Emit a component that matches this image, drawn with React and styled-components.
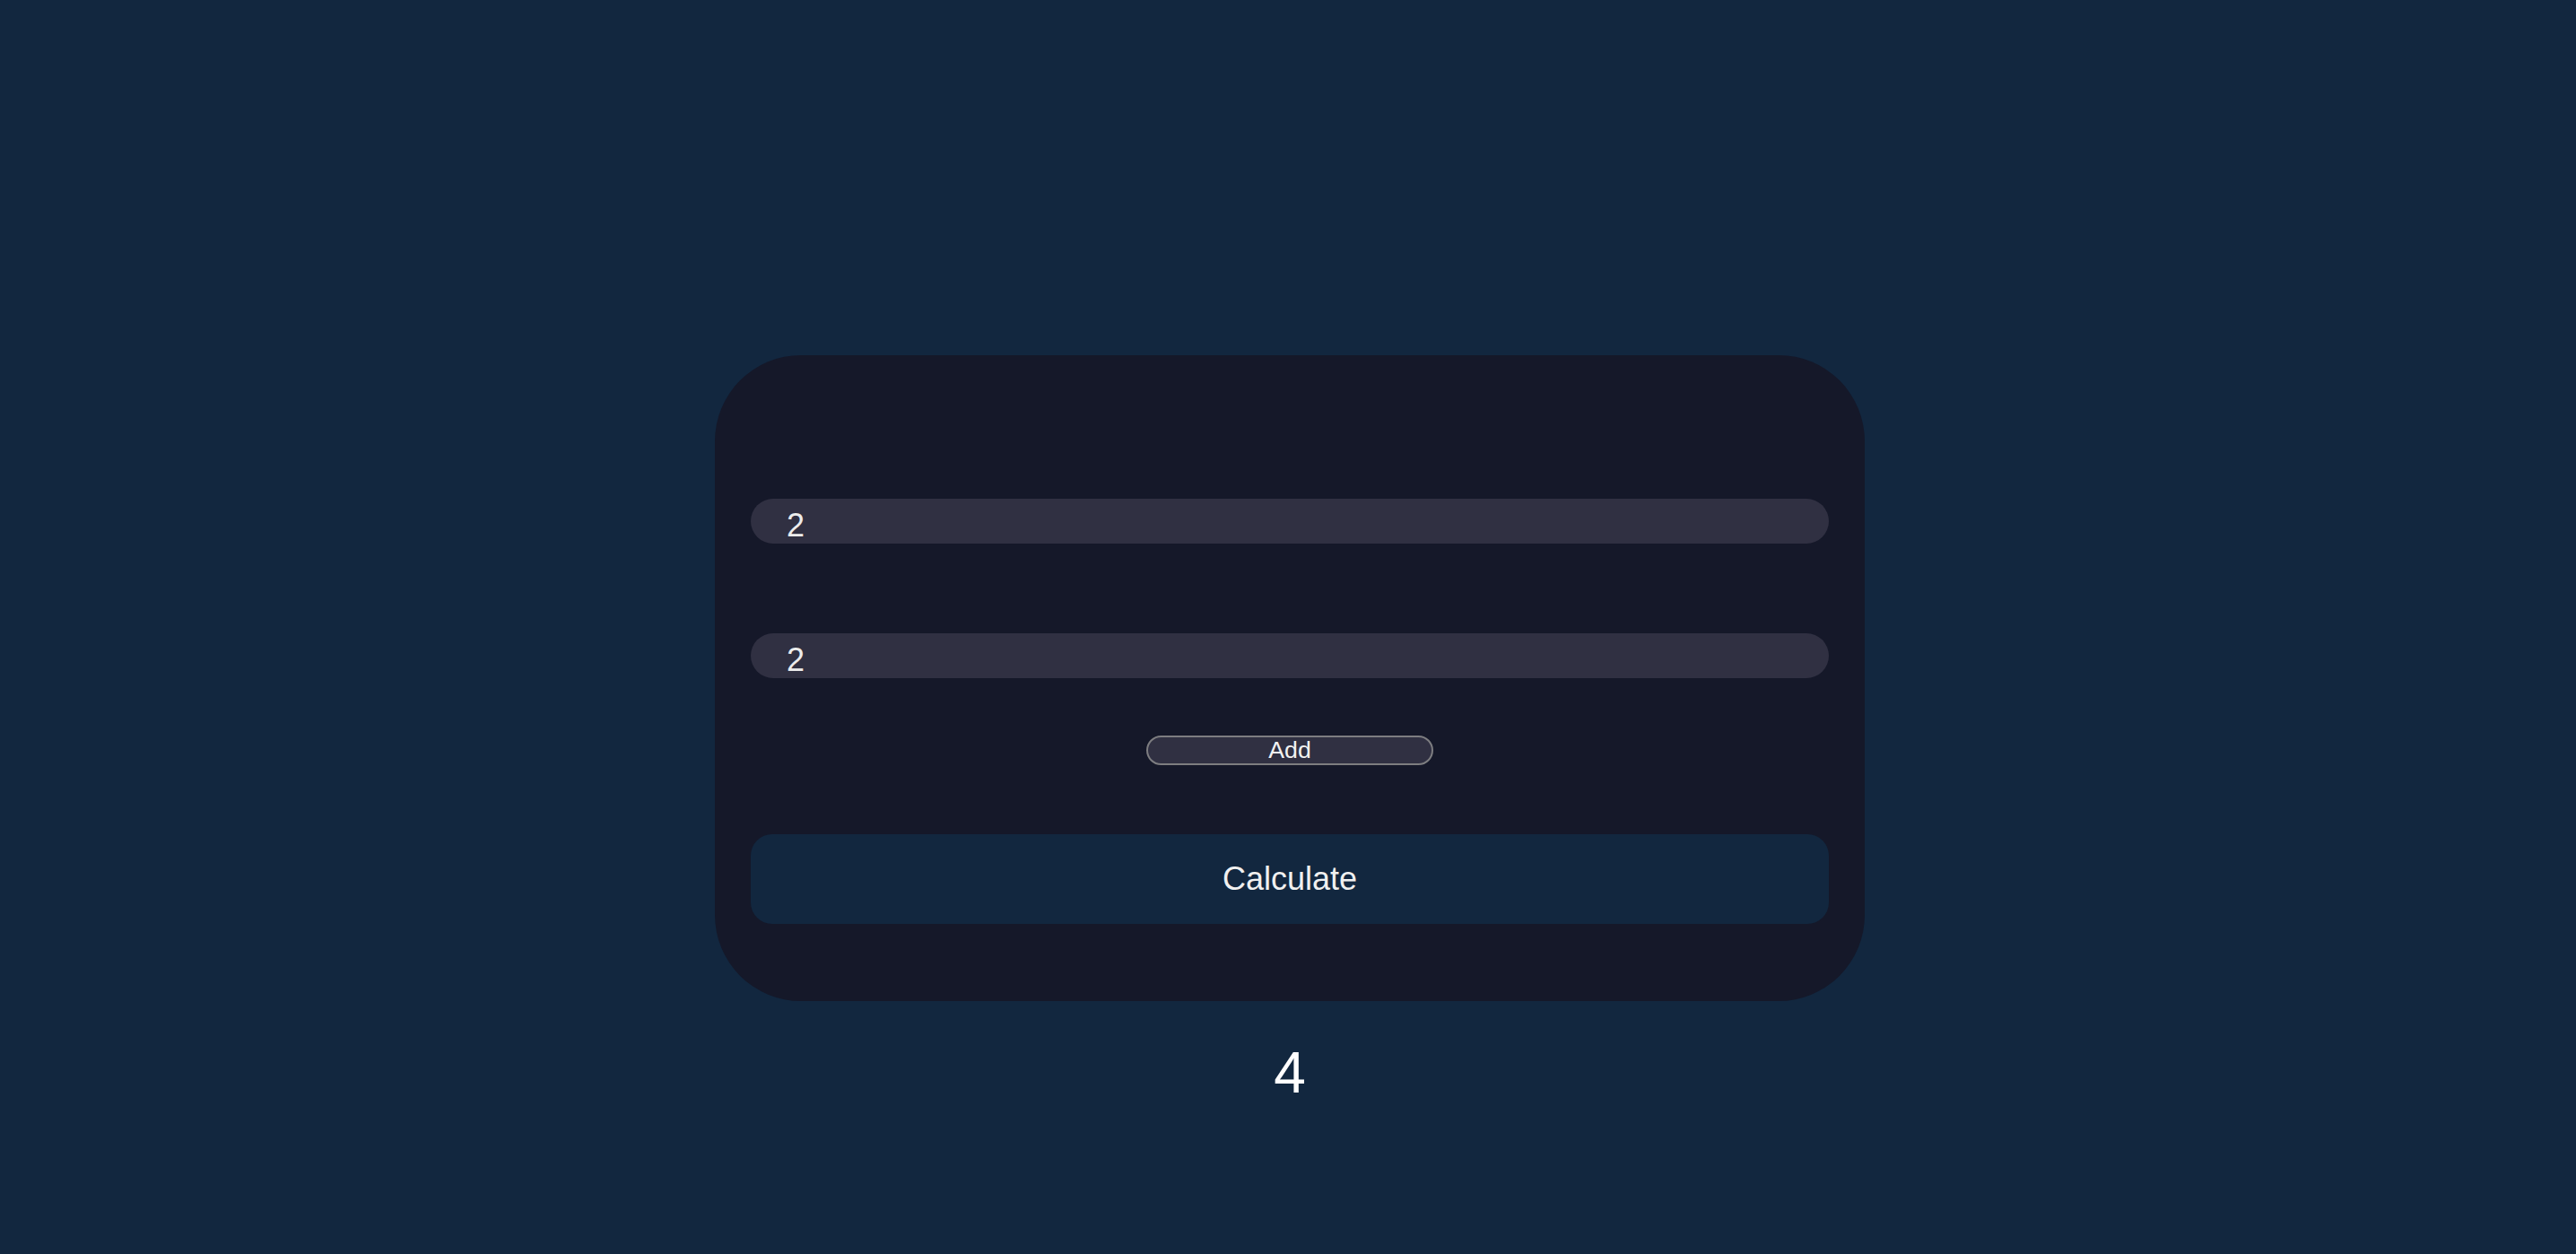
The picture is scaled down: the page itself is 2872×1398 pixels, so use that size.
import React, { useState } from "react";
import styled, { createGlobalStyle } from "styled-components";

const GlobalStyle = createGlobalStyle`
  * {
    box-sizing: border-box;
  }

  body {
    margin: 0;
    background-color: #12273f;
    font-family: "Liberation Sans", Arial, sans-serif;
    color: #ffffff;
  }
`;

const Page = styled.main`
  min-height: 100vh;
  display: flex;
  flex-direction: column;
  align-items: center;
  padding: 396px 0 0 4px;
`;

const Card = styled.form`
  width: 1282px;
  padding: 160px 40px 86px;
  background-color: #151829;
  border-radius: 96px;
  display: flex;
  flex-direction: column;
  align-items: center;
`;

const NumberInput = styled.input`
  width: 100%;
  height: 50px;
  margin-top: ${({ $gap }) => $gap || 0}px;
  padding: 10px 0 0 40px;
  border: none;
  outline: none;
  border-radius: 25px;
  background-color: #303042;
  color: #ececec;
  font-family: "Liberation Sans", Arial, sans-serif;
  font-size: 36px;
`;

const AddButton = styled.button`
  width: 320px;
  height: 33px;
  margin-top: 64px;
  padding: 0;
  border: 2px solid #7d7d80;
  border-radius: 17px;
  background-color: #303042;
  color: #f2f2f2;
  font-family: "Liberation Sans", Arial, sans-serif;
  font-size: 26.67px;
  line-height: 1;
  cursor: pointer;
`;

const CalcButton = styled.button`
  width: 100%;
  height: 100px;
  margin-top: 77px;
  border: none;
  border-radius: 24px;
  background-color: #12273f;
  color: #f0f0f0;
  font-family: "Liberation Sans", Arial, sans-serif;
  font-size: 36px;
  cursor: pointer;
`;

const Result = styled.h1`
  margin: 43px 0;
  font-size: 64px;
  font-weight: 400;
  color: #ffffff;
`;

const App = () => {
  const [values, setValues] = useState(["2", "2"]);
  const [result, setResult] = useState(4);

  const update = (i, v) => {
    const next = [...values];
    next[i] = v;
    setValues(next);
  };

  const calculate = (e) => {
    e.preventDefault();
    setResult(values.reduce((sum, v) => sum + (Number(v) || 0), 0));
  };

  return (
    <>
      <GlobalStyle />
      <Page>
        <Card onSubmit={calculate}>
          {values.map((v, i) => (
            <NumberInput
              key={i}
              type="text"
              value={v}
              $gap={i === 0 ? 0 : 100}
              onChange={(e) => update(i, e.target.value)}
            />
          ))}
          <AddButton type="button" onClick={() => setValues([...values, "0"])}>
            Add
          </AddButton>
          <CalcButton type="submit">Calculate</CalcButton>
        </Card>
        <Result>{result}</Result>
      </Page>
    </>
  );
};

export default App;
